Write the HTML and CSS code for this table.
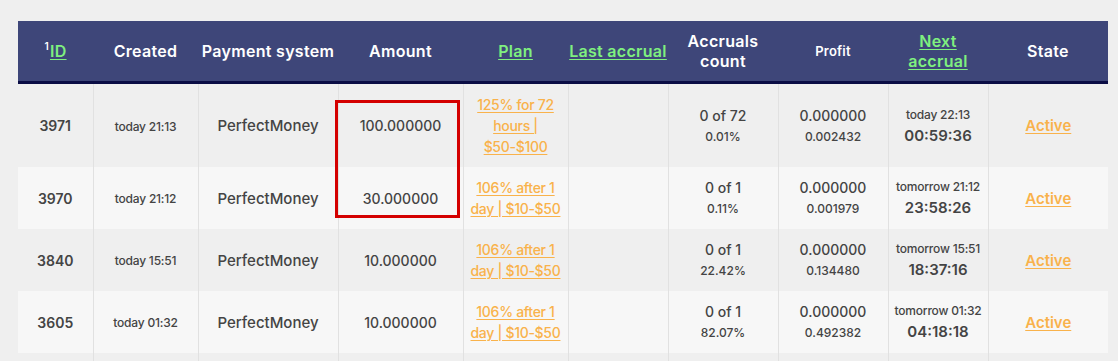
FILE: index.html
```html
<!DOCTYPE html>
<html lang="en">
<head>
<meta charset="utf-8">
<title>Deposits</title>
<link rel="stylesheet" href="styles.css">
</head>
<body>
<div class="page">
  <div class="table-wrap">
    <table class="deposits">
      <colgroup>
        <col class="c-id"><col class="c-created"><col class="c-ps"><col class="c-amount"><col class="c-plan">
        <col class="c-last"><col class="c-count"><col class="c-profit"><col class="c-next"><col class="c-state">
      </colgroup>
      <thead>
        <tr>
          <th><span class="sup">1</span><a href="#" class="hlink">ID</a></th>
          <th>Created</th>
          <th>Payment system</th>
          <th>Amount</th>
          <th><a href="#" class="hlink">Plan</a></th>
          <th><a href="#" class="hlink">Last accrual</a></th>
          <th>Accruals<br>count</th>
          <th class="small-h">Profit</th>
          <th><a href="#" class="hlink">Next<br>accrual</a></th>
          <th>State</th>
        </tr>
      </thead>
      <tbody>
        <tr>
          <td class="id">3971</td>
          <td class="created"><span class="date">today 21:13</span></td>
          <td class="ps">PerfectMoney</td>
          <td class="amount">100.000000</td>
          <td class="plan"><a href="#">125% for 72 hours | $50-$100</a></td>
          <td></td>
          <td><div class="main">0 of 72</div><div class="sub">0.01%</div></td>
          <td><div class="main">0.000000</div><div class="sub">0.002432</div></td>
          <td><div class="date">today 22:13</div><div class="timer">00:59:36</div></td>
          <td class="state"><a href="#">Active</a></td>
        </tr>
        <tr>
          <td class="id">3970</td>
          <td class="created"><span class="date">today 21:12</span></td>
          <td class="ps">PerfectMoney</td>
          <td class="amount">30.000000</td>
          <td class="plan"><a href="#">106% after 1 day | $10-$50</a></td>
          <td></td>
          <td><div class="main">0 of 1</div><div class="sub">0.11%</div></td>
          <td><div class="main">0.000000</div><div class="sub">0.001979</div></td>
          <td><div class="date">tomorrow 21:12</div><div class="timer">23:58:26</div></td>
          <td class="state"><a href="#">Active</a></td>
        </tr>
        <tr>
          <td class="id">3840</td>
          <td class="created"><span class="date">today 15:51</span></td>
          <td class="ps">PerfectMoney</td>
          <td class="amount">10.000000</td>
          <td class="plan"><a href="#">106% after 1 day | $10-$50</a></td>
          <td></td>
          <td><div class="main">0 of 1</div><div class="sub">22.42%</div></td>
          <td><div class="main">0.000000</div><div class="sub">0.134480</div></td>
          <td><div class="date">tomorrow 15:51</div><div class="timer">18:37:16</div></td>
          <td class="state"><a href="#">Active</a></td>
        </tr>
        <tr>
          <td class="id">3605</td>
          <td class="created"><span class="date">today 01:32</span></td>
          <td class="ps">PerfectMoney</td>
          <td class="amount">10.000000</td>
          <td class="plan"><a href="#">106% after 1 day | $10-$50</a></td>
          <td></td>
          <td><div class="main">0 of 1</div><div class="sub">82.07%</div></td>
          <td><div class="main">0.000000</div><div class="sub">0.492382</div></td>
          <td><div class="date">tomorrow 01:32</div><div class="timer">04:18:18</div></td>
          <td class="state"><a href="#">Active</a></td>
        </tr>
        <tr class="empty-row">
          <td></td><td></td><td></td><td></td><td></td>
          <td></td><td></td><td></td><td></td><td></td>
        </tr>
      </tbody>
    </table>
    <div class="highlight"></div>
  </div>
</div>
</body>
</html>
```

FILE: styles.css
```css
html, body {
  margin: 0;
  padding: 0;
  background: #efefef;
}

body {
  font-family: Inter, "Open Sans", Arial, sans-serif;
  color: #444444;
}

.page {
  padding: 21px 10px 0 18px;
}

.table-wrap {
  position: relative;
  width: 1090px;
}

.deposits {
  width: 1090px;
  table-layout: fixed;
  border-collapse: collapse;
  border-spacing: 0;
}

.c-id { width: 75px; }
.c-created { width: 105px; }
.c-ps { width: 140px; }
.c-amount { width: 125px; }
.c-plan { width: 105px; }
.c-last { width: 100px; }
.c-count { width: 110px; }
.c-profit { width: 110px; }
.c-next { width: 100px; }
.c-state { width: 120px; }

.deposits thead th {
  background: #3e4679;
  color: #ffffff;
  height: 60px;
  padding: 0;
  font-size: 16px;
  font-weight: 600;
  line-height: 20px;
  letter-spacing: 0.3px;
  text-align: center;
  vertical-align: middle;
  border-bottom: 3px solid #0b0d45;
  white-space: nowrap;
}

.deposits thead th.small-h {
  font-size: 13px;
  letter-spacing: 0.2px;
}

.hlink {
  color: #7ff07f;
  text-decoration: underline;
  text-underline-offset: 2px;
}

.sup {
  font-size: 10px;
  line-height: 0;
  vertical-align: 7px;
  margin-right: 1px;
}

.deposits tbody td {
  padding: 10px 3px;
  text-align: center;
  vertical-align: middle;
  border-left: 1px solid #e1e1e1;
  font-size: 14px;
  font-weight: 500;
  line-height: 21px;
  background: #efefef;
}

.deposits tbody td:first-child {
  border-left: none;
}

.deposits tbody tr:nth-child(even) td {
  background: #f7f7f7;
}

.deposits tbody tr.empty-row td {
  height: 42px;
}

.deposits tbody td.id {
  font-weight: 600;
  font-size: 14px;
}

.date {
  font-size: 12px;
  font-weight: 500;
  line-height: 20px;
  white-space: nowrap;
  letter-spacing: -0.2px;
}

.deposits tbody td.ps {
  font-size: 15px;
}

.deposits tbody td.amount {
  font-size: 14px;
}

.plan a, .state a {
  color: #f9b24b;
  text-decoration: underline;
  text-underline-offset: 2px;
}

.deposits tbody td.plan {
  padding-left: 0;
  padding-right: 0;
  letter-spacing: -0.3px;
}

.main {
  font-size: 14px;
  line-height: 22px;
}

.sub {
  font-size: 12px;
  line-height: 20px;
}

.timer {
  font-size: 15px;
  font-weight: 600;
  line-height: 22px;
}

.deposits tbody td.state {
  font-size: 15px;
  font-weight: 600;
}

.highlight {
  position: absolute;
  left: 317px;
  top: 79px;
  width: 125px;
  height: 118px;
  border: 3px solid #d40000;
  box-sizing: border-box;
  pointer-events: none;
}
```
